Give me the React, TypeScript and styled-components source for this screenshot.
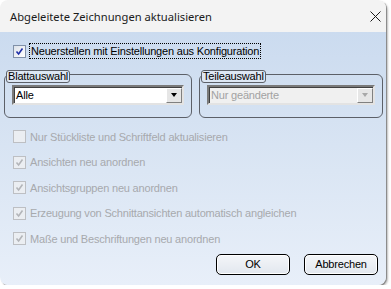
import React from "react";
import styled, { createGlobalStyle } from "styled-components";

const GlobalStyle = createGlobalStyle`
   html, body {
      margin: 0;
      padding: 0;
      background: #ffffff;
   }
   body {
      font-family: "Liberation Sans", Arial, sans-serif;
   }
   * {
      box-sizing: border-box;
   }
`;

const Window = styled.div`
   width: 386px;
   height: 285px;
   border-radius: 8px;
   overflow: hidden;
   display: flex;
   flex-direction: column;
   box-shadow: 1px 1px 0 #8c8c8c, 2px 2px 2px rgba(0, 0, 0, 0.25);
`;

const TitleBar = styled.div`
   height: 32px;
   flex: none;
   background: #f3f3f3;
   display: flex;
   align-items: center;
   justify-content: space-between;
   padding-left: 10px;
   font-family: "Noto Sans", "Open Sans", sans-serif;
   font-size: 11.2px;
   color: #1a1a1a;
`;

const CloseButton = styled.div`
   width: 22px;
   height: 32px;
   display: flex;
   align-items: center;
   justify-content: center;
`;

const Body = styled.div`
   flex: 1;
   display: flex;
   flex-direction: column;
   background: linear-gradient(to bottom, #cbdbef 0%, #dbe6f4 55%, #e8eff9 100%);
   font-size: 11px;
   letter-spacing: -0.19px;
`;

const CheckRow = styled.label<{ $disabled?: boolean }>`
   display: flex;
   align-items: center;
   gap: 4px;
   padding-left: 13px;
   height: ${(p) => (p.$disabled ? "25.5px" : "16px")};
   color: ${(p) => (p.$disabled ? "#a7a9ad" : "#000000")};
`;

const TopRow = styled.div`
   margin-top: 11px;
`;

const Box = styled.span<{ $disabled?: boolean }>`
   width: 13px;
   height: 13px;
   flex: none;
   display: flex;
   align-items: center;
   justify-content: center;
   border: 1px solid ${(p) => (p.$disabled ? "#bdbfc3" : "#8090a8")};
   background: ${(p) =>
      p.$disabled ? "#ebeef2" : "linear-gradient(135deg, #dde2ea, #ffffff)"};
`;

const FocusLabel = styled.span`
   outline: 1px dotted #000;
   padding: 0 1px;
   line-height: 14px;
`;

const Groups = styled.div`
   display: grid;
   grid-template-columns: 188px 184px;
   column-gap: 7px;
   margin: 11px 0 0 4px;
`;

const Group = styled.div`
   position: relative;
   margin-top: 4px;
   height: 44px;
   border: 1px solid #5c6068;
   border-radius: 6px;
   padding: 10px 7px 0 7px;
`;

const Legend = styled.span`
   position: absolute;
   top: -5px;
   left: 1px;
   height: 13px;
   line-height: 11px;
   padding: 0 1px;
   border: 1px solid #5c6068;
   border-radius: 3px;
   background: #dde7f4;
   color: #000;
`;

const Select = styled.div<{ $disabled?: boolean }>`
   height: 20px;
   display: flex;
   align-items: center;
   justify-content: space-between;
   border-style: solid;
   border-width: 2px;
   border-color: #7a7a7a #e3e3e3 #e3e3e3 #7a7a7a;
   background: ${(p) => (p.$disabled ? "#f0f0f0" : "#ffffff")};
   color: ${(p) => (p.$disabled ? "#a2a2a2" : "#000000")};
   padding-left: 2px;
   box-shadow: inset 1px 1px 0 #404040;
`;

const DropButton = styled.span<{ $disabled?: boolean }>`
   width: 16px;
   height: 15px;
   display: flex;
   align-items: center;
   justify-content: center;
   background: #e6e6e6;
   border-style: solid;
   border-width: 1px;
   border-color: #ffffff #808080 #808080 #ffffff;
   margin-right: 0px;

   &::after {
      content: "";
      border-left: 3.5px solid transparent;
      border-right: 3.5px solid transparent;
      border-top: 4px solid ${(p) => (p.$disabled ? "#a8a8a8" : "#000000")};
   }
`;

const OptionList = styled.div`
   margin-top: 6px;
   display: flex;
   flex-direction: column;
`;

const ButtonBar = styled.div`
   display: flex;
   justify-content: flex-end;
   gap: 14px;
   margin-top: 2px;
   padding-right: 8px;
`;

const Button = styled.div`
   width: 74px;
   height: 21px;
   display: flex;
   align-items: center;
   justify-content: center;
   border: 1px solid #000000;
   border-radius: 5px;
   background: linear-gradient(to bottom, #f4f6f9, #e2e7ee);
   box-shadow: inset 0 0 0 1px #ffffff;
   color: #000;
`;

function Check({ disabled }: { disabled?: boolean }) {
   return (
      <Box $disabled={disabled}>
         <svg width="9" height="9" viewBox="0 0 9 9">
            <path
               d="M1.5 4.5 L3.6 7 L7.5 1.5"
               fill="none"
               stroke={disabled ? "#b3b5b9" : "#1f2fa8"}
               strokeWidth="1.6"
            />
         </svg>
      </Box>
   );
}

const options = [
   { text: "Nur Stückliste und Schriftfeld aktualisieren", checked: false },
   { text: "Ansichten neu anordnen", checked: true },
   { text: "Ansichtsgruppen neu anordnen", checked: true },
   { text: "Erzeugung von Schnittansichten automatisch angleichen", checked: true },
   { text: "Maße und Beschriftungen neu anordnen", checked: true },
];

export default function App() {
   return (
      <>
         <GlobalStyle />
         <Window>
            <TitleBar>
               Abgeleitete Zeichnungen aktualisieren
               <CloseButton>
                  <svg width="11" height="11" viewBox="0 0 11 11">
                     <path d="M0.5 0.5 L10.5 10.5 M10.5 0.5 L0.5 10.5" stroke="#1a1a1a" strokeWidth="1" />
                  </svg>
               </CloseButton>
            </TitleBar>
            <Body>
               <TopRow>
                  <CheckRow>
                     <Check />
                     <FocusLabel>Neuerstellen mit Einstellungen aus Konfiguration</FocusLabel>
                  </CheckRow>
               </TopRow>
               <Groups>
                  <Group>
                     <Legend>Blattauswahl</Legend>
                     <Select>
                        Alle
                        <DropButton />
                     </Select>
                  </Group>
                  <Group>
                     <Legend>Teileauswahl</Legend>
                     <Select $disabled>
                        Nur geänderte
                        <DropButton $disabled />
                     </Select>
                  </Group>
               </Groups>
               <OptionList>
                  {options.map((o) => (
                     <CheckRow key={o.text} $disabled>
                        {o.checked ? <Check disabled /> : <Box $disabled />}
                        {o.text}
                     </CheckRow>
                  ))}
               </OptionList>
               <ButtonBar>
                  <Button>OK</Button>
                  <Button>Abbrechen</Button>
               </ButtonBar>
            </Body>
         </Window>
      </>
   );
}
